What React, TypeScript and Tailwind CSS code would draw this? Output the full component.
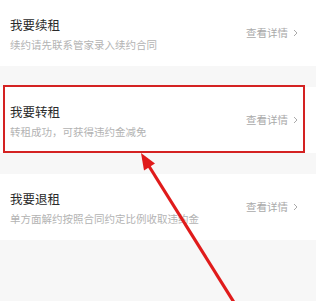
import React from 'react'

const rows = [
  { title: '我要续租', desc: '续约请先联系管家录入续约合同' },
  { title: '我要转租', desc: '转租成功，可获得违约金减免' },
  { title: '我要退租', desc: '单方面解约按照合同约定比例收取违约金' },
]

function Row({ title, desc }: { title: string; desc: string }) {
  return (
    <div className="flex h-[66px] items-center justify-between bg-white pl-[10px] pr-[18px]">
      <div className="flex flex-col pt-[4px]">
        <span className="text-[12.5px] leading-[20px] text-[#2a2a2a]">{title}</span>
        <span className="text-[10.5px] leading-[20px] text-[#b3b3b3]">{desc}</span>
      </div>
      <div className="flex items-center gap-[5px] pl-[2px] text-[10.5px] text-[#aaa]">
        <span>查看详情</span>
        <svg width="5" height="8" viewBox="0 0 5 8" fill="none">
          <path d="M1 1l3 3-3 3" stroke="#aaa" strokeWidth="1" />
        </svg>
      </div>
    </div>
  )
}

export default function App() {
  return (
    <div
      className="relative h-[301px] w-[316px] overflow-hidden bg-[#f7f7f7]"
      style={{ fontFamily: '"Noto Sans CJK SC", "Noto Sans", sans-serif' }}
    >
      <div className="flex flex-col gap-[21px]">
        {rows.map((r) => (
          <Row key={r.title} {...r} />
        ))}
      </div>

      {/* annotation box */}
      <div className="absolute left-[3px] top-[85px] h-[68px] w-[302px] border-2 border-[#d42222]" />

      {/* annotation arrow */}
      <svg className="absolute left-0 top-0" width="316" height="301" viewBox="0 0 316 301">
        <line x1="147" y1="163" x2="245" y2="320" stroke="#e01b1b" strokeWidth="3.2" />
        <polygon points="141,153 144,170.5 155,163.5" fill="#e01b1b" />
      </svg>
    </div>
  )
}
